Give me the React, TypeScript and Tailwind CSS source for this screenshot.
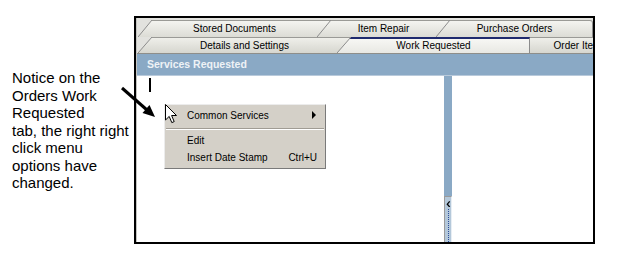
import clsx from "clsx";

type TabProps = {
  label: string;
  className: string;
  selected?: boolean;
  last?: boolean;
  row: 1 | 2;
};

const Tab = ({ label, className, selected, last, row }: TabProps) => {
  return (
    <div className={clsx("relative h-full shrink-0", selected && "z-10", className)}>
      <div
        className={clsx(
          "absolute inset-0 [clip-path:polygon(0_100%,14px_0,100%_0,100%_100%)] border-t",
          selected
            ? "border-t-2 border-t-[#1f2a6e] border-r border-r-[#8c8c8c] bg-linear-to-b from-[#f7f7f4] to-[#e8e8e3]"
            : row === 1
              ? "border-t-[#9a9a96] bg-linear-to-b from-[#f4f4f0] to-[#dcdcd5]"
              : "border-t-[#9a9a96] bg-linear-to-b from-[#efefea] to-[#d6d6cf]",
          last && "border-r border-r-[#8c8c8c] rounded-tr-[3px]"
        )}
      />
      <svg
        className="absolute left-0 top-0 h-full w-[14px]"
        viewBox="0 0 14 16"
        preserveAspectRatio="none"
      >
        <line x1="0" y1="16" x2="14" y2="0" stroke="#8c8c8c" strokeWidth="1" vectorEffect="non-scaling-stroke" />
      </svg>
      <span
        className={clsx(
          "relative flex h-full justify-center pl-[14px] pr-[14px] text-[10px] leading-none text-black",
          row === 1 ? "items-end pb-[3px]" : "items-center pt-[1px]"
        )}
      >
        {label}
      </span>
    </div>
  );
};

const MenuItem = ({ label, right, arrow, className }: { label: string; right?: string; arrow?: boolean; className: string }) => (
  <div className={clsx("flex items-center pl-[22px] pr-[8px] text-[10px] text-black", className)}>
    <span className="flex-1">{label}</span>
    {right && <span>{right}</span>}
    {arrow && (
      <span className="mr-[1px] h-0 w-0 border-y-[4px] border-l-[4px] border-y-transparent border-l-black" />
    )}
  </div>
);

export default function App() {
  return (
    <div className="relative flex h-[268px] w-[624px] bg-white font-['Liberation_Sans',Arial,sans-serif]">
      {/* annotation */}
      <div className="w-[134px] shrink-0 pl-[12px] pt-[69px] text-[15px] leading-[17.5px] text-black">
        Notice on the
        <br />
        Orders Work
        <br />
        Requested
        <br />
        tab, the right right
        <br />
        click menu
        <br />
        options have
        <br />
        changed.
      </div>

      {/* screenshot window */}
      <div className="mt-[16px] flex h-[228px] w-[461px] shrink-0 flex-col overflow-hidden border-2 border-black">
        <div className="flex flex-1 flex-col border-l border-[#c4c4c0]">
          {/* tab strip */}
          <div className="flex flex-col bg-[#e2e2de] pt-[2px]">
            <div className="flex h-[17px]">
              <Tab row={1} label="Stored Documents" className="ml-[1px] w-[193px]" />
              <Tab row={1} label="Item Repair" className="-ml-[14px] w-[133px]" />
              <Tab row={1} label="Purchase Orders" className="-ml-[14px] w-[157px]" last />
            </div>
            <div className="flex h-[17px] border-b border-[#8e8e8a]">
              <Tab row={2} label="Details and Settings" className="ml-[1px] w-[213px]" />
              <Tab row={2} label="Work Requested" className="-ml-[14px] w-[193px]" selected />
              <Tab row={2} label="Order Items" className="-ml-[14px] w-[128px]" />
            </div>
          </div>

          {/* header */}
          <div className="h-[22px] border-b border-[#b9cadb] bg-[#8aa9c5] pl-[10px] pt-[3px] text-[10.5px] font-bold leading-[14px] text-[#eef2f6]">
            Services Requested
          </div>

          {/* body */}
          <div className="flex flex-1">
            <div className="relative w-[307px] shrink-0 bg-white">
              <div className="absolute left-[12px] top-[2px] h-[14px] w-[2px] bg-black" />

              {/* context menu */}
              <div className="absolute left-[27px] top-[28px] flex h-[65px] w-[162px] flex-col border border-b-[#7a7a7a] border-l-[#ececec] border-r-[#7a7a7a] border-t-[#ececec] bg-[#d4d0c8] pb-[2px] pt-[1px]">
                <MenuItem label="Common Services" arrow className="h-[19px]" />
                <div className="flex h-[8px] flex-col px-[1px] pt-[3px]">
                  <div className="h-px bg-[#a09c94]" />
                  <div className="h-px bg-white" />
                </div>
                <MenuItem label="Edit" className="h-[17px]" />
                <MenuItem label="Insert Date Stamp" right="Ctrl+U" className="h-[17px]" />
              </div>

              {/* mouse pointer */}
              <svg className="absolute left-[28px] top-[28px]" width="13" height="20" viewBox="0 0 13 20">
                <path d="M0.5 0.5 L0.5 16 L4.2 12.4 L6.8 18.6 L9.2 17.6 L6.6 11.5 L11.5 11.5 Z" fill="white" stroke="black" strokeWidth="1" />
              </svg>
            </div>

            {/* splitter */}
            <div className="flex w-[8px] shrink-0 flex-col">
              <div className="flex-1 bg-[#8aa9c5]" />
              <div className="flex h-[46px] flex-col items-center border-l border-t border-l-[#9a9a9a] border-t-[#9a9a9a] border-r border-r-[#e8eef4] bg-[#b4c8da] pt-[4px]">
                <svg width="5" height="8" viewBox="0 0 5 8">
                  <polyline points="4,0.5 1,4 4,7.5" fill="none" stroke="black" strokeWidth="1.6" />
                </svg>
                <div className="mt-[2px] h-full border-l border-dotted border-[#2a4c9a]" />
              </div>
            </div>

            <div className="flex-1 bg-white" />
          </div>
        </div>
      </div>

      {/* annotation arrow */}
      <svg className="pointer-events-none absolute left-0 top-0" width="624" height="268">
        <line x1="122" y1="88" x2="147" y2="110" stroke="black" strokeWidth="3" />
        <polygon points="155,117 142.5,113 149.5,105" fill="black" />
      </svg>
    </div>
  );
}
